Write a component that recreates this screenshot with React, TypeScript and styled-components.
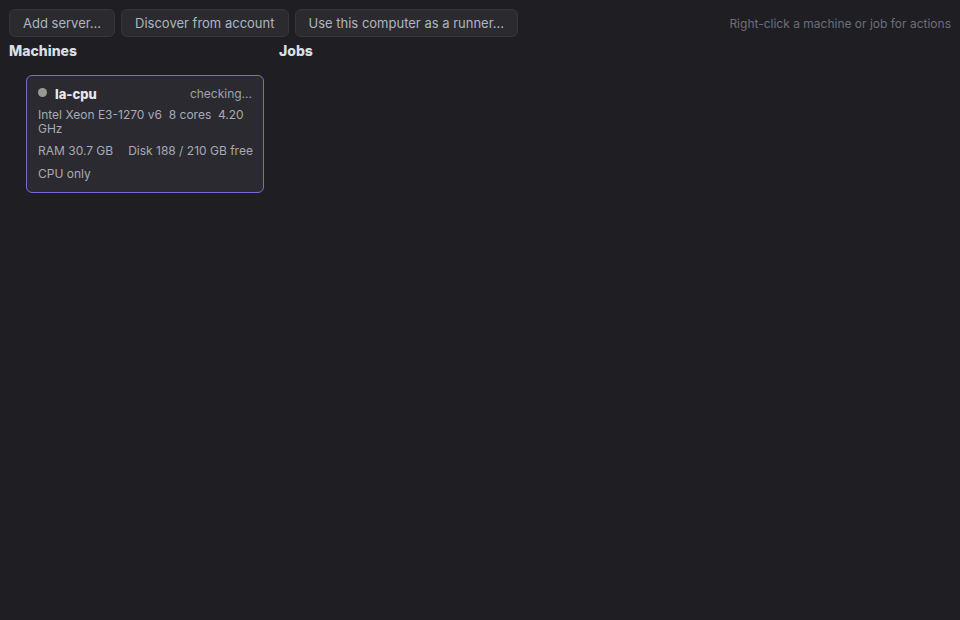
import { createGlobalStyle, styled } from 'styled-components';

const GlobalStyle = createGlobalStyle`
  html, body {
    margin: 0;
    padding: 0;
    background: #1f1f23;
    font-family: Inter, "Noto Sans", sans-serif;
  }
  #root {
    min-height: 620px;
  }
`;

const Page = styled.div`
  min-height: 620px;
  background: #1f1f23;
  padding: 9px;
  box-sizing: border-box;
`;

const Toolbar = styled.div`
  display: flex;
  align-items: center;
  gap: 6px;
`;

const Button = styled.button`
  height: 28px;
  padding: 0 13px;
  background: #2a2a2f;
  border: 1px solid #36363c;
  border-radius: 6px;
  color: #b0b6c1;
  font-family: Inter, sans-serif;
  font-size: 13px;
  cursor: pointer;
`;

const Hint = styled.div`
  margin-left: auto;
  color: #6b6e79;
  font-size: 12px;
`;

const Columns = styled.div`
  display: grid;
  grid-template-columns: 270px 1fr;
  margin-top: 6px;
`;

const Heading = styled.div`
  color: #d9dee6;
  font-size: 14px;
  font-weight: 800;
  line-height: 16px;
`;

const CardList = styled.div`
  padding: 16px 0 0 17px;
`;

const Card = styled.div<{ $selected?: boolean }>`
  width: 238px;
  box-sizing: border-box;
  padding: 10px 11px 11px;
  background: #2b2a30;
  border: 1px solid ${(p) => (p.$selected ? '#7d68d6' : '#3a3a40')};
  border-radius: 6px;
  color: #a7abb4;
  font-size: 12px;
`;

const CardHead = styled.div`
  display: flex;
  align-items: center;
  line-height: 16px;
`;

const Dot = styled.span<{ $color: string }>`
  width: 9px;
  height: 9px;
  border-radius: 50%;
  background: ${(p) => p.$color};
  margin-right: 8px;
  margin-top: -3px;
`;

const Name = styled.span`
  color: #e8e8ec;
  font-weight: 800;
  font-size: 13px;
`;

const Status = styled.span`
  margin-left: auto;
  color: #9ea2ab;
`;

const Spec = styled.div`
  margin-top: 6px;
  line-height: 14px;
  white-space: pre-wrap;
`;

const Stats = styled.div`
  display: flex;
  gap: 15px;
  margin-top: 8px;
  line-height: 14px;
  white-space: nowrap;
`;

const Note = styled.div`
  margin-top: 9px;
  line-height: 14px;
`;

export default function App() {
  return (
    <>
      <GlobalStyle />
      <Page>
        <Toolbar>
          <Button>Add server...</Button>
          <Button>Discover from account</Button>
          <Button>Use this computer as a runner...</Button>
          <Hint>Right-click a machine or job for actions</Hint>
        </Toolbar>
        <Columns>
          <div>
            <Heading>Machines</Heading>
            <CardList>
              <Card $selected>
                <CardHead>
                  <Dot $color="#9a9a92" />
                  <Name>la-cpu</Name>
                  <Status>checking...</Status>
                </CardHead>
                <Spec>{'Intel Xeon E3-1270 v6  8 cores  4.20 GHz'}</Spec>
                <Stats>
                  <span>RAM 30.7 GB</span>
                  <span>Disk 188 / 210 GB free</span>
                </Stats>
                <Note>CPU only</Note>
              </Card>
            </CardList>
          </div>
          <div>
            <Heading>Jobs</Heading>
          </div>
        </Columns>
      </Page>
    </>
  );
}
